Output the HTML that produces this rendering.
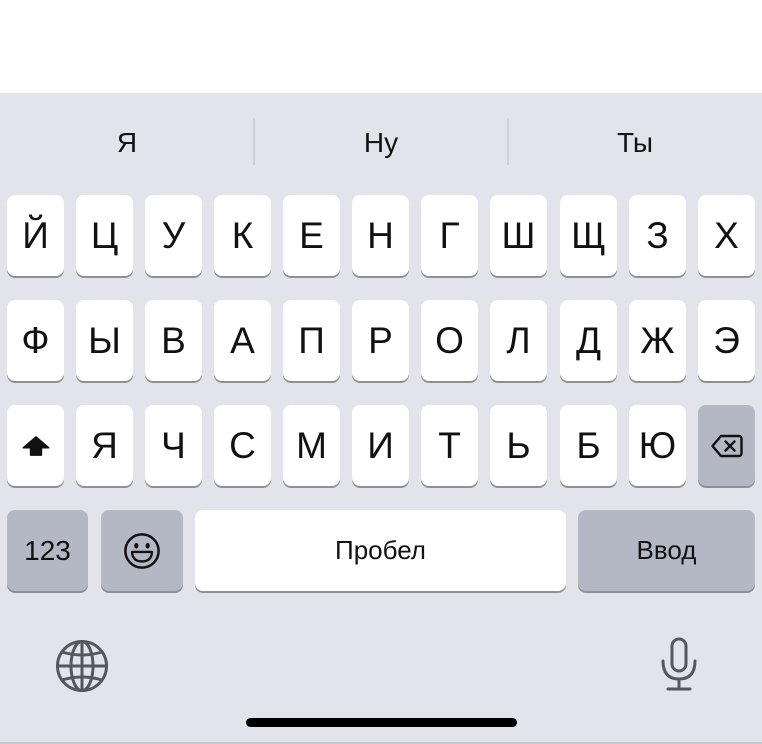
<!DOCTYPE html>
<html><head><meta charset="utf-8"><style>
html,body{margin:0;padding:0}
body{width:762px;height:744px;position:relative;background:#fff;overflow:hidden;font-family:"Liberation Sans","DejaVu Sans",sans-serif}
.kb{position:absolute;left:0;top:93px;width:762px;height:649px;background:#e3e3eb}
.bl{position:absolute;left:0;top:742px;width:762px;height:2px;background:#c8c8cc}
.s{position:absolute;top:126px;font-size:28px;color:#111;width:254px;text-align:center;line-height:34px}
.dv{position:absolute;top:118px;width:2px;height:47px;background:#cfcfd6}
.k{position:absolute;width:57px;height:81px;background:#fff;border-radius:8px;box-shadow:0 2px 0 #8f9096;font-size:37px;color:#111;display:flex;align-items:center;justify-content:center}
.g{background:#b4b8c4}
</style></head><body>
<div class="kb"></div>
<div class="s" style="left:0">Я</div>
<div class="s" style="left:254px">Ну</div>
<div class="s" style="left:508px">Ты</div>
<div class="dv" style="left:253px"></div>
<div class="dv" style="left:507px"></div>

<div class="k" style="left:7px;top:195px">Й</div>
<div class="k" style="left:76px;top:195px">Ц</div>
<div class="k" style="left:145px;top:195px">У</div>
<div class="k" style="left:214px;top:195px">К</div>
<div class="k" style="left:283px;top:195px">Е</div>
<div class="k" style="left:352px;top:195px">Н</div>
<div class="k" style="left:421px;top:195px">Г</div>
<div class="k" style="left:490px;top:195px">Ш</div>
<div class="k" style="left:560px;top:195px">Щ</div>
<div class="k" style="left:629px;top:195px">З</div>
<div class="k" style="left:698px;top:195px">Х</div>

<div class="k" style="left:7px;top:300px">Ф</div>
<div class="k" style="left:76px;top:300px">Ы</div>
<div class="k" style="left:145px;top:300px">В</div>
<div class="k" style="left:214px;top:300px">А</div>
<div class="k" style="left:283px;top:300px">П</div>
<div class="k" style="left:352px;top:300px">Р</div>
<div class="k" style="left:421px;top:300px">О</div>
<div class="k" style="left:490px;top:300px">Л</div>
<div class="k" style="left:560px;top:300px">Д</div>
<div class="k" style="left:629px;top:300px">Ж</div>
<div class="k" style="left:698px;top:300px">Э</div>

<div class="k" style="left:7px;top:405px"><svg width="28" height="22" viewBox="0 0 30 24"><path d="M15 2 L29 14 H21 V22 H9 V14 H1 Z" fill="#111" stroke="#111" stroke-width="1.5" stroke-linejoin="round"/></svg></div>
<div class="k" style="left:76px;top:405px">Я</div>
<div class="k" style="left:145px;top:405px">Ч</div>
<div class="k" style="left:214px;top:405px">С</div>
<div class="k" style="left:283px;top:405px">М</div>
<div class="k" style="left:352px;top:405px">И</div>
<div class="k" style="left:421px;top:405px">Т</div>
<div class="k" style="left:490px;top:405px">Ь</div>
<div class="k" style="left:560px;top:405px">Б</div>
<div class="k" style="left:629px;top:405px">Ю</div>
<div class="k g" style="left:698px;top:405px"><svg width="32" height="24" viewBox="0 0 32 24"><path d="M10 2 H28 a2.5 2.5 0 0 1 2.5 2.5 V19.5 a2.5 2.5 0 0 1 -2.5 2.5 H10 L1.5 12 Z" fill="none" stroke="#111" stroke-width="2.4" stroke-linejoin="round"/><path d="M14.5 7.5 L23.5 16.5 M23.5 7.5 L14.5 16.5" stroke="#111" stroke-width="2.4" stroke-linecap="round"/></svg></div>

<div class="k g" style="left:7px;top:510px;width:81px;font-size:28px">123</div>
<div class="k g" style="left:101px;top:510px;width:82px"><svg width="38" height="38" viewBox="0 0 40 40"><circle cx="20" cy="20" r="17.5" fill="none" stroke="#111" stroke-width="2.6"/><ellipse cx="14" cy="14.5" rx="2.2" ry="3" fill="#111"/><ellipse cx="26" cy="14.5" rx="2.2" ry="3" fill="#111"/><path d="M9.5 21 H30.5 Q30 31 20 31 Q10 31 9.5 21 Z" fill="none" stroke="#111" stroke-width="2.4" stroke-linejoin="round"/></svg></div>
<div class="k" style="left:195px;top:510px;width:371px;font-size:26px">Пробел</div>
<div class="k g" style="left:578px;top:510px;width:177px;font-size:26px">Ввод</div>

<svg style="position:absolute;left:55px;top:639px" width="54" height="54" viewBox="0 0 54 54"><g fill="none" stroke="#56565c" stroke-width="3"><circle cx="27" cy="27" r="24.5"/><ellipse cx="27" cy="27" rx="11" ry="24.5"/><line x1="27" y1="2.5" x2="27" y2="51.5"/><line x1="2.5" y1="27" x2="51.5" y2="27"/><path d="M7 13 Q27 19 47 13 M7 41 Q27 35 47 41"/></g></svg>
<svg style="position:absolute;left:659px;top:637px" width="40" height="56" viewBox="0 0 40 56"><g fill="none" stroke="#56565c" stroke-width="3" stroke-linecap="round"><rect x="13" y="2" width="14" height="32" rx="7"/><path d="M4 24 Q4 42 20 42 Q36 42 36 24"/><line x1="20" y1="42" x2="20" y2="52"/><line x1="9" y1="52" x2="31" y2="52"/></g></svg>

<div style="position:absolute;left:246px;top:718px;width:271px;height:9px;border-radius:5px;background:#000"></div>
<div class="bl"></div>
</body></html>
